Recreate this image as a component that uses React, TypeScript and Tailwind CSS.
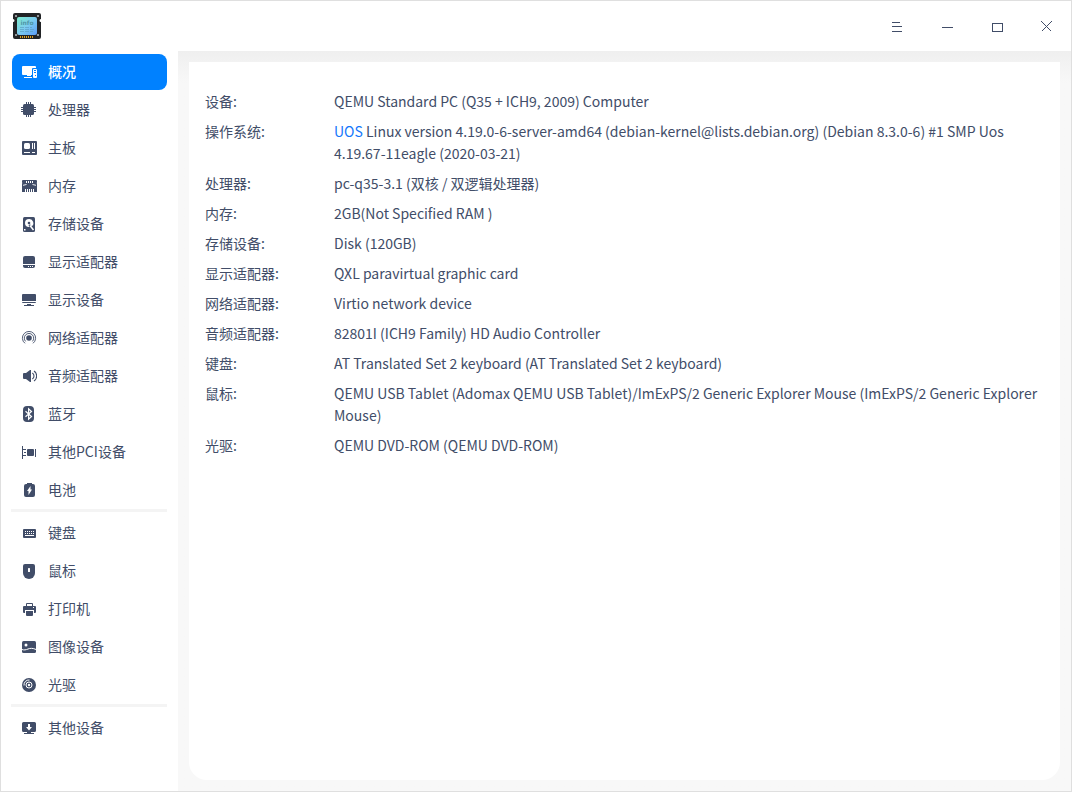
import type { ReactNode } from "react";

type NavItem = { label: string; icon: ReactNode };

const HOLE = "#ffffff";

const overviewIcon = (
  <>
    <path d="M2 2h12a1 1 0 0 1 1 1v1h-3a1 1 0 0 0-1 1v6H2a1 1 0 0 1-1-1V3a1 1 0 0 1 1-1z" />
    <path d="M6 11h4v1H6zM3 13h8v1H3z" />
    <path d="M13 5h2a1 1 0 0 1 1 1v7a1 1 0 0 1-1 1h-2a1 1 0 0 1-1-1V6a1 1 0 0 1 1-1z" />
    <path fill="#0081ff" d="M13 6h2v1h-2zM13 8h2v1h-2zM14 11h1v1h-1z" />
  </>
);

const cpuIcon = (
  <>
    <rect x="2" y="2" width="11" height="11" rx="1.500" />
    <path d="M5 0h1v15H5zM7 0h1v15H7zM9 0h1v15H9zM0 5h15v1H0zM0 7h15v1H0zM0 9h15v1H0z" />
  </>
);

const boardIcon = (
  <>
    <rect x="1" y="1" width="15" height="14" rx="1" />
    <rect x="3" y="3" width="6" height="6" rx="1.500" fill={HOLE} />
    <path fill={HOLE} d="M11 3h1v6h-1zM13 3h1v6h-1zM3 12h6v1H3zM11 12h3v1h-3z" />
  </>
);

const memoryIcon = (
  <>
    <path d="M2 2h13a1 1 0 0 1 1 1v1.500l-.5.5.5.5V14H1V5.500l.5-.5-.5-.5V3a1 1 0 0 1 1-1z" />
    <path fill={HOLE} d="M5 3h1v2H5zM7 3h1v2H7zM9 3h1v2H9zM11 3h1v2h-1zM4 11h1v3H4zM6 11h1v3H6zM8 11h1v3H8zM10 11h1v3h-1zM12 11h1v3h-1z" />
    <path fill="none" stroke={HOLE} strokeWidth=".9" d="M2 7.300l3.500-.8M15 7.300l-3.500-.8" />
  </>
);

const diskIcon = (
  <>
    <rect x="2" y="1" width="12" height="15" rx="1.500" />
    <path fill={HOLE} d="M8 3a4 4 0 1 0 0 8l.5-.1L7.600 9.200 9 8.300l1.600 2A4 4 0 0 0 8 3z" />
    <circle cx="8" cy="7" r="1.300" />
    <path fill="none" stroke={HOLE} strokeWidth="1.500" d="M9 9.500l3.500 4.500" />
    <path fill={HOLE} d="M3 13h1.500v1.500H3z" />
  </>
);

const adapterIcon = (
  <>
    <path d="M4 2h8a2 2 0 0 1 2 2v6H2V4a2 2 0 0 1 2-2z" />
    <path d="M2 11h12v1a2 2 0 0 1-2 2H4a2 2 0 0 1-2-2z" />
    <path fill={HOLE} d="M7 12h1v1H7zM9 12h1v1H9zM11 12h1v1h-1z" />
  </>
);

const monitorIcon = (
  <path d="M2 2h12a1 1 0 0 1 1 1v6H1V3a1 1 0 0 1 1-1zM1 10h14a1 1 0 0 1-1 1H2a1 1 0 0 1-1-1zM6 12h4v1H6zM3 13h10v1H3z" />
);

const networkIcon = (
  <>
    <circle cx="8" cy="8" r="2.800" />
    <path fill="none" stroke="currentColor" strokeWidth=".9" d="M4.600 11.400a4.700 4.700 0 1 1 6.800 0M4 13.300a6.600 6.600 0 1 1 8 0" />
  </>
);

const audioIcon = (
  <>
    <path d="M3 5h2l4-3h1v12H9l-4-3H3a1 1 0 0 1-1-1V6a1 1 0 0 1 1-1z" />
    <path fill="none" stroke="currentColor" strokeWidth="1.100" d="M11.300 5a3.500 3.500 0 0 1 0 6M13 3a6 6 0 0 1 0 10" />
  </>
);

const bluetoothIcon = (
  <>
    <rect x="2" y="0" width="11" height="16" rx="4" />
    <path fill="none" stroke={HOLE} strokeWidth="1.200" d="M4.500 5.300l6 5.200-2.900 2.700V2.800l2.900 2.700-6 5.200" />
  </>
);

const pciIcon = (
  <>
    <path d="M1 2h1v13H1zM2 5h3v1H2zM2 11h3v1H2zM3 8h2v1H3zM14 5h1v8h-1z" />
    <rect x="6" y="5" width="7" height="7" rx="1" />
  </>
);

const batteryIcon = (
  <>
    <path d="M6 1h5v1h1a2 2 0 0 1 2 2v9a2 2 0 0 1-2 2H5a2 2 0 0 1-2-2V4a2 2 0 0 1 2-2h1z" />
    <path fill={HOLE} d="M9.500 4v3.500H11L7.500 13V9H6z" />
  </>
);

const keyboardIcon = (
  <>
    <rect x="2" y="4" width="13" height="9" rx="1" />
    <path fill={HOLE} d="M4 6h1v1H4zM6 6h1v1H6zM8 6h1v1H8zM10 6h1v1h-1zM12 6h1v1h-1zM4 8h1v1H4zM6 8h1v1H6zM8 8h1v1H8zM10 8h1v1h-1zM12 8h1v1h-1zM4 10h9v1H4z" />
  </>
);

const mouseIcon = (
  <>
    <path d="M4 1h8a2 2 0 0 1 2 2v7a6 6 0 0 1-12 0V3a2 2 0 0 1 2-2z" />
    <rect x="7" y="5" width="2" height="4" rx=".5" fill={HOLE} />
  </>
);

const printerIcon = (
  <>
    <path d="M5 5V3a1 1 0 0 1 1-1h5a1 1 0 0 1 1 1v2h-1V3H6v2z" />
    <path d="M3 5h11a1 1 0 0 1 1 1v5a1 1 0 0 1-1 1h-1V9H4v3H3a1 1 0 0 1-1-1V6a1 1 0 0 1 1-1z" />
    <path d="M5 10h7v4a1 1 0 0 1-1 1H6a1 1 0 0 1-1-1z" />
    <path fill={HOLE} d="M12 6h1v1h-1z" />
  </>
);

const imageIcon = (
  <>
    <rect x="1" y="2" width="14" height="12" rx="1.500" />
    <circle cx="5" cy="6" r="1.500" fill={HOLE} />
    <path fill="none" stroke={HOLE} d="M1 10.500c2 .8 4 .4 6-.5s5-1 8 .5" />
  </>
);

const discIcon = (
  <>
    <circle cx="8" cy="8" r="7" />
    <circle cx="8" cy="8" r="3" fill="none" stroke={HOLE} />
    <circle cx="8" cy="8" r="1.200" fill={HOLE} />
    <path fill="none" stroke={HOLE} d="M3 8.500a5 5 0 0 1 5.500-5.500" />
  </>
);

const otherIcon = (
  <>
    <path d="M2.500 2h11A1.500 1.500 0 0 1 15 3.500v7a1.500 1.500 0 0 1-1.500 1.500h-11A1.500 1.500 0 0 1 1 10.500v-7A1.500 1.500 0 0 1 2.500 2zM6 12h4v1H6zM3 13h10v1H3z" />
    <path fill={HOLE} d="M7 4h2v3h2l-3 3.500L5 7h2z" />
  </>
);

const groups: NavItem[][] = [
  [
    { label: "概况", icon: overviewIcon },
    { label: "处理器", icon: cpuIcon },
    { label: "主板", icon: boardIcon },
    { label: "内存", icon: memoryIcon },
    { label: "存储设备", icon: diskIcon },
    { label: "显示适配器", icon: adapterIcon },
    { label: "显示设备", icon: monitorIcon },
    { label: "网络适配器", icon: networkIcon },
    { label: "音频适配器", icon: audioIcon },
    { label: "蓝牙", icon: bluetoothIcon },
    { label: "其他PCI设备", icon: pciIcon },
    { label: "电池", icon: batteryIcon },
  ],
  [
    { label: "键盘", icon: keyboardIcon },
    { label: "鼠标", icon: mouseIcon },
    { label: "打印机", icon: printerIcon },
    { label: "图像设备", icon: imageIcon },
    { label: "光驱", icon: discIcon },
  ],
  [{ label: "其他设备", icon: otherIcon }],
];

const details: { name: string; value: ReactNode }[] = [
  { name: "设备:", value: "QEMU Standard PC (Q35 + ICH9, 2009) Computer" },
  {
    name: "操作系统:",
    value: (
      <>
        <a href="#uos" className="text-[#1577fb]">UOS</a> Linux version 4.19.0-6-server-amd64
        (debian-kernel@lists.debian.org) (Debian 8.3.0-6) #1 SMP Uos 4.19.67-11eagle (2020-03-21)
      </>
    ),
  },
  { name: "处理器:", value: "pc-q35-3.1 (双核 / 双逻辑处理器)" },
  { name: "内存:", value: "2GB(Not Specified RAM )" },
  { name: "存储设备:", value: "Disk (120GB)" },
  { name: "显示适配器:", value: "QXL paravirtual graphic card" },
  { name: "网络适配器:", value: "Virtio network device" },
  { name: "音频适配器:", value: "82801I (ICH9 Family) HD Audio Controller" },
  { name: "键盘:", value: "AT Translated Set 2 keyboard (AT Translated Set 2 keyboard)" },
  {
    name: "鼠标:",
    value:
      "QEMU USB Tablet (Adomax QEMU USB Tablet)/ImExPS/2 Generic Explorer Mouse (ImExPS/2 Generic Explorer Mouse)",
  },
  { name: "光驱:", value: "QEMU DVD-ROM (QEMU DVD-ROM)" },
];

const windowButtons = [
  { label: "菜单", path: "M21 21.500h8M21 25.500h10M21 30.500h10" },
  { label: "最小化", path: "M21 26.500h11" },
  { label: "最大化", path: "M21.500 22.500h10v8h-10z" },
  { label: "关闭", path: "M20.500 20.500l10 10M30.500 20.500l-10 10" },
];

function AppLogo() {
  return (
    <svg width="30" height="28" viewBox="0 0 30 28" aria-hidden="true">
      <defs>
        <linearGradient id="chip" x1="0" y1="0" x2="1" y2="1">
          <stop offset="0" stopColor="#7deccb" />
          <stop offset=".5" stopColor="#7cccf0" />
          <stop offset="1" stopColor="#5b9df8" />
        </linearGradient>
      </defs>
      <path
        fill="#222426"
        d="M3 1h24a2 2 0 0 1 2 2v4a1.500 1.500 0 0 0 0 3v15a2 2 0 0 1-2 2H3a2 2 0 0 1-2-2V10a1.500 1.500 0 0 0 0-3V3a2 2 0 0 1 2-2z"
      />
      <g fill="#b9bcc0">
        <circle cx="4" cy="4" r="1" />
        <circle cx="26" cy="4" r="1" />
        <circle cx="4" cy="23" r="1" />
        <circle cx="26" cy="23" r="1" />
      </g>
      <rect x="5" y="5" width="20" height="18" rx="2" fill="url(#chip)" />
      <path fill="#e0a021" d="M8 24h1v2H8zM10 24h1v2h-1zM12 24h1v2h-1zM14 24h1v2h-1zM16 24h1v2h-1zM18 24h1v2h-1zM20 24h1v2h-1z" />
      <text x="15" y="13" textAnchor="middle" fontSize="6" fontWeight="700" fontFamily="DejaVu Sans, sans-serif" fill="#4f97a8">
        info
      </text>
      <path stroke="#5c9fc4" strokeDasharray="4 1" d="M8 15.500h12M8 17.500h14M8 19.500h13" opacity=".7" />
    </svg>
  );
}

export default function App() {
  return (
    <div className="flex min-h-screen flex-col border border-[#dfdfdf] bg-white font-['Noto_Sans_CJK_SC','Noto_Sans',sans-serif] text-sm text-[#414d68]">
      <header className="flex h-[50px] items-center justify-between pl-[11px]">
        <AppLogo />
        <div className="flex">
          {windowButtons.map(({ label, path }) => (
            <button key={label} type="button" aria-label={label} className="h-[50px] w-[50px]">
              <svg width="50" height="50" viewBox="0 0 50 50" fill="none" stroke="currentColor" shapeRendering="crispEdges">
                <path d={path} />
              </svg>
            </button>
          ))}
        </div>
      </header>

      <div className="flex flex-1">
        <nav className="w-[177px] shrink-0 pt-[3px] pr-[11px] pl-[10px]">
          {groups.map((items, group) => (
            <div key={items[0].label}>
              {group > 0 && <hr className="mt-px mb-[3px] h-[3px] border-0 bg-[#f4f4f4]" />}
              <ul className="flex flex-col gap-[2px] pl-px">
                {items.map(({ label, icon }) => (
                  <li key={label}>
                    <button
                      type="button"
                      className={
                        label === "概况"
                          ? "flex h-9 w-full items-center gap-[11px] rounded-lg bg-[#0081ff] pl-[9px] font-medium text-white"
                          : "flex h-9 w-full items-center gap-[11px] rounded-lg pl-[9px]"
                      }
                    >
                      <svg width="16" height="16" viewBox="0 0 16 16" fill="currentColor" aria-hidden="true">
                        {icon}
                      </svg>
                      <span className="pb-[2px]">{label}</span>
                    </button>
                  </li>
                ))}
              </ul>
            </div>
          ))}
        </nav>

        <main className="flex flex-1 bg-[#f8f8f8] bg-linear-to-b from-[#efefef] to-[#f8f8f8] to-[32px] p-[11px]">
          <section className="flex-1 rounded-b-[18px] bg-white px-4 pt-6">
            <table className="w-full text-left leading-[22px]">
              <tbody>
                {details.map(({ name, value }) => (
                  <tr key={name} className="align-top">
                    <th scope="row" className="w-[129px] p-0 py-1 font-normal">{name}</th>
                    <td className="p-0 py-1">{value}</td>
                  </tr>
                ))}
              </tbody>
            </table>
          </section>
        </main>
      </div>
    </div>
  );
}
